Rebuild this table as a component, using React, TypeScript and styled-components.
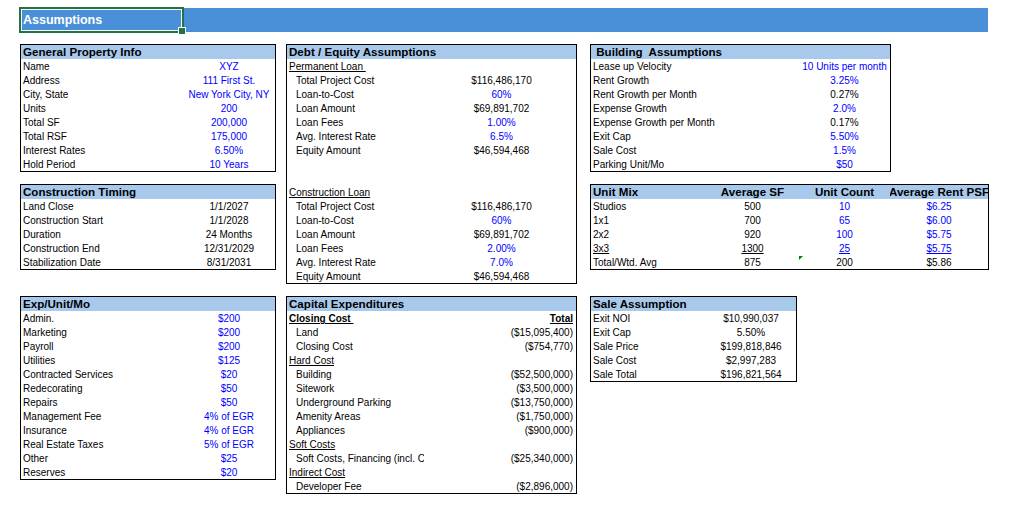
import React from "react";
import styled, { createGlobalStyle, css } from "styled-components";

const GlobalStyle = createGlobalStyle`
  body {
    margin: 0;
    background: #fff;
    color: #000;
    font-family: "Liberation Sans", Arial, sans-serif;
  }
`;

const Page = styled.div`
  padding: 8px 0 0 20px;
`;

const TitleBar = styled.div`
  width: 968px;
  height: 24px;
  background: #4a90d9;
  display: flex;
`;

const TitleCell = styled.div`
  position: relative;
  width: 163px;
  box-sizing: border-box;
  display: flex;
  align-items: center;
  padding-left: 3px;
  color: #fff;
  font-weight: bold;
  font-size: 12.5px;
`;

const Selection = styled.div`
  position: absolute;
  left: -1px;
  top: -1px;
  width: 165px;
  height: 26px;
  box-sizing: border-box;
  border: 2px solid #217346;
  box-shadow: inset 0 0 0 1px #fff;
`;

const Handle = styled.div`
  position: absolute;
  right: -4px;
  bottom: -4px;
  width: 6px;
  height: 6px;
  background: #217346;
  border: 1px solid #fff;
`;

const Sheet = styled.div`
  display: grid;
  grid-template-columns: 266px 304px auto;
  grid-template-rows: 128px 100px auto;
  row-gap: 12px;
  align-items: start;
  margin-top: 12px;
`;

const Box = styled.div<{ $w: number; $span?: boolean }>`
  width: ${(p) => p.$w}px;
  box-sizing: border-box;
  border: 1px solid #000;
  ${(p) => p.$span && "grid-row: span 2;"}
`;

const Row = styled.div<{ $cols: string; $head?: boolean }>`
  display: grid;
  grid-template-columns: ${(p) => p.$cols};
  height: 14px;
  line-height: 15px;
  font-size: 10px;
  white-space: pre;
  ${(p) =>
    p.$head &&
    css`
      background: #a8c9ec;
      font-weight: bold;
      font-size: 11.6px;
      line-height: 14px;
    `}
`;

type Align = "left" | "center" | "right";

const Cell = styled.div<{
  $align: Align;
  $blue?: boolean;
  $u?: boolean;
  $b?: boolean;
  $indent?: boolean;
  $flag?: boolean;
}>`
  position: relative;
  display: flex;
  overflow: hidden;
  justify-content: ${(p) =>
    p.$align === "left" ? "flex-start" : p.$align === "right" ? "flex-end" : "center"};
  padding-left: ${(p) => (p.$align === "left" ? (p.$indent ? "9px" : "2px") : "0")};
  padding-right: ${(p) => (p.$align === "right" ? "3px" : "0")};
  color: ${(p) => (p.$blue ? "#0000ff" : "#000")};
  ${(p) => p.$u && "text-decoration: underline;"}
  ${(p) => p.$b && "font-weight: bold;"}
  ${(p) =>
    p.$flag &&
    css`
      &::before {
        content: "";
        position: absolute;
        left: 0;
        top: 1px;
        border-top: 4px solid #008000;
        border-right: 4px solid transparent;
      }
    `}
`;

type CellDef = { t: string; blue?: boolean; u?: boolean; b?: boolean; flag?: boolean };
type RowDef = { cells: (string | CellDef)[]; indent?: boolean };

const B = (t: string): CellDef => ({ t, blue: true });

interface TableProps {
  title: string;
  width: number;
  cols: string;
  align: Align[];
  head?: string[];
  rows: RowDef[];
  span?: boolean;
}

const Table: React.FC<TableProps> = ({ title, width, cols, align, head, rows, span }) => (
  <Box $w={width} $span={span}>
    <Row $cols={head ? cols : "1fr"} $head>
      {(head || [title]).map((h, i) => (
        <Cell key={i} $align={i === 0 ? "left" : "center"}>
          {h}
        </Cell>
      ))}
    </Row>
    {rows.map((r, ri) => (
      <Row key={ri} $cols={cols}>
        {align.map((a, ci) => {
          const raw = r.cells[ci];
          const c: CellDef = typeof raw === "string" ? { t: raw } : raw || { t: "" };
          return (
            <Cell
              key={ci}
              $align={a}
              $blue={c.blue}
              $u={c.u}
              $b={c.b}
              $flag={c.flag}
              $indent={ci === 0 && r.indent}
            >
              {c.t}
            </Cell>
          );
        })}
      </Row>
    ))}
  </Box>
);

const general: RowDef[] = [
  { cells: ["Name", B("XYZ")] },
  { cells: ["Address", B("111 First St.")] },
  { cells: ["City, State", B("New York City, NY")] },
  { cells: ["Units", B("200")] },
  { cells: ["Total SF", B("200,000")] },
  { cells: ["Total RSF", B("175,000")] },
  { cells: ["Interest Rates", B("6.50%")] },
  { cells: ["Hold Period", B("10 Years")] },
];

const loan = (ltc: string, fees: string, rate: string): RowDef[] => [
  { cells: ["Total Project Cost", "$116,486,170"], indent: true },
  { cells: ["Loan-to-Cost", B(ltc)], indent: true },
  { cells: ["Loan Amount", "$69,891,702"], indent: true },
  { cells: ["Loan Fees", B(fees)], indent: true },
  { cells: ["Avg. Interest Rate", B(rate)], indent: true },
  { cells: ["Equity Amount", "$46,594,468"], indent: true },
];

const debt: RowDef[] = [
  { cells: [{ t: "Permanent Loan ", u: true }] },
  ...loan("60%", "1.00%", "6.5%"),
  { cells: [] },
  { cells: [] },
  { cells: [{ t: "Construction Loan", u: true }] },
  ...loan("60%", "2.00%", "7.0%"),
];

const building: RowDef[] = [
  { cells: ["Lease up Velocity", B("10 Units per month")] },
  { cells: ["Rent Growth", B("3.25%")] },
  { cells: ["Rent Growth per Month", "0.27%"] },
  { cells: ["Expense Growth", B("2.0%")] },
  { cells: ["Expense Growth per Month", "0.17%"] },
  { cells: ["Exit Cap", B("5.50%")] },
  { cells: ["Sale Cost", B("1.5%")] },
  { cells: ["Parking Unit/Mo", B("$50")] },
];

const timing: RowDef[] = [
  { cells: ["Land Close", "1/1/2027"] },
  { cells: ["Construction Start", "1/1/2028"] },
  { cells: ["Duration", "24 Months"] },
  { cells: ["Construction End", "12/31/2029"] },
  { cells: ["Stabilization Date", "8/31/2031"] },
];

const unitMix: RowDef[] = [
  { cells: ["Studios", "500", B("10"), B("$6.25")] },
  { cells: ["1x1", "700", B("65"), B("$6.00")] },
  { cells: ["2x2", "920", B("100"), B("$5.75")] },
  {
    cells: [
      { t: "3x3", u: true },
      { t: "1300", u: true },
      { t: "25", u: true, blue: true },
      { t: "$5.75", u: true, blue: true },
    ],
  },
  { cells: ["Total/Wtd. Avg", "875", { t: "200", flag: true }, "$5.86"] },
];

const expenses: RowDef[] = [
  { cells: ["Admin.", B("$200")] },
  { cells: ["Marketing", B("$200")] },
  { cells: ["Payroll", B("$200")] },
  { cells: ["Utilities", B("$125")] },
  { cells: ["Contracted Services", B("$20")] },
  { cells: ["Redecorating", B("$50")] },
  { cells: ["Repairs", B("$50")] },
  { cells: ["Management Fee", B("4% of EGR")] },
  { cells: ["Insurance", B("4% of EGR")] },
  { cells: ["Real Estate Taxes", B("5% of EGR")] },
  { cells: ["Other", B("$25")] },
  { cells: ["Reserves", B("$20")] },
];

const capex: RowDef[] = [
  { cells: [{ t: "Closing Cost ", u: true, b: true }, { t: "Total", u: true, b: true }] },
  { cells: ["Land", "($15,095,400)"], indent: true },
  { cells: ["Closing Cost", "($754,770)"], indent: true },
  { cells: [{ t: "Hard Cost", u: true }] },
  { cells: ["Building", "($52,500,000)"], indent: true },
  { cells: ["Sitework", "($3,500,000)"], indent: true },
  { cells: ["Underground Parking", "($13,750,000)"], indent: true },
  { cells: ["Amenity Areas", "($1,750,000)"], indent: true },
  { cells: ["Appliances", "($900,000)"], indent: true },
  { cells: [{ t: "Soft Costs", u: true }] },
  { cells: ["Soft Costs, Financing (incl. Closing Costs)", "($25,340,000)"], indent: true },
  { cells: [{ t: "Indirect Cost", u: true }] },
  { cells: ["Developer Fee", "($2,896,000)"], indent: true },
];

const sale: RowDef[] = [
  { cells: ["Exit NOI", "$10,990,037"] },
  { cells: ["Exit Cap", "5.50%"] },
  { cells: ["Sale Price", "$199,818,846"] },
  { cells: ["Sale Cost", "$2,997,283"] },
  { cells: ["Sale Total", "$196,821,564"] },
];

const App: React.FC = () => (
  <>
    <GlobalStyle />
    <Page>
      <TitleBar>
        <TitleCell>
          Assumptions
          <Selection>
            <Handle />
          </Selection>
        </TitleCell>
      </TitleBar>

      <Sheet>
        <Table title="General Property Info" width={256} cols="162px 92px" align={["left", "center"]} rows={general} />
        <Table
          title="Debt / Equity Assumptions"
          width={291}
          cols="140px 149px"
          align={["left", "center"]}
          rows={debt}
          span
        />
        <Table title=" Building  Assumptions" width={301} cols="208px 91px" align={["left", "center"]} rows={building} />
        <Table title="Construction Timing" width={256} cols="162px 92px" align={["left", "center"]} rows={timing} />
        <Table
          title="Unit Mix"
          width={399}
          cols="115px 93px 91px 98px"
          align={["left", "center", "center", "center"]}
          head={["Unit Mix", "Average SF", "Unit Count", "Average Rent PSF"]}
          rows={unitMix}
        />
        <Table title="Exp/Unit/Mo" width={256} cols="162px 92px" align={["left", "center"]} rows={expenses} />
        <Table title="Capital Expenditures" width={291} cols="137px 152px" align={["left", "right"]} rows={capex} />
        <Table title="Sale Assumption" width={207} cols="115px 90px" align={["left", "center"]} rows={sale} />
      </Sheet>
    </Page>
  </>
);

export default App;
